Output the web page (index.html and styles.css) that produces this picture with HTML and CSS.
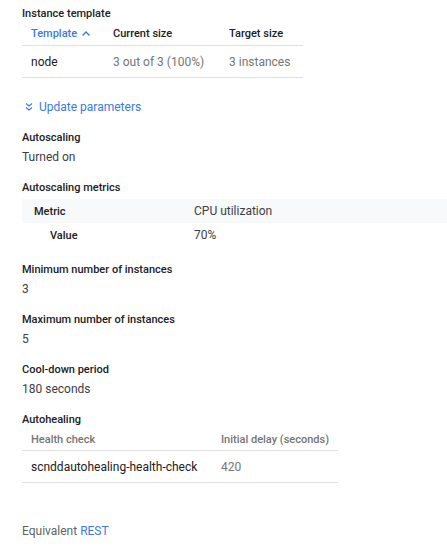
FILE: index.html
```html
<!DOCTYPE html>
<html>
<head>
<meta charset="utf-8">
<link rel="stylesheet" href="styles.css">
</head>
<body>
<div class="page">
  <div class="label first">Instance template</div>
  <div class="tbl tpl">
    <div class="cell head sort">Template
      <svg class="chev" width="10" height="10" viewBox="0 0 10 10"><path d="M1.5 6.5 L5 3 L8.5 6.5" fill="none" stroke="#3b78e7" stroke-width="1.4"/></svg>
    </div>
    <div class="cell head">Current size</div>
    <div class="cell head">Target size</div>
    <div class="cell body">node</div>
    <div class="cell body muted">3 out of 3 (100%)</div>
    <div class="cell body muted">3 instances</div>
  </div>

  <a class="update" href="#">
    <svg class="dchev" width="10" height="10" viewBox="0 0 10 10"><path d="M2 1.5 L5 4 L8 1.5 M2 5.5 L5 8 L8 5.5" fill="none" stroke="#3b78e7" stroke-width="1.1"/></svg>
    Update parameters
  </a>

  <div class="section">
    <div class="label">Autoscaling</div>
    <div class="value">Turned on</div>
  </div>

  <div class="section metrics-section">
    <div class="label metrics-label">Autoscaling metrics</div>
    <div class="metrics">
      <div class="mrow shade"><div class="mkey">Metric</div><div class="mval">CPU utilization</div></div>
      <div class="mrow"><div class="mkey sub">Value</div><div class="mval">70%</div></div>
    </div>
  </div>

  <div class="section">
    <div class="label">Minimum number of instances</div>
    <div class="value">3</div>
  </div>

  <div class="section">
    <div class="label">Maximum number of instances</div>
    <div class="value">5</div>
  </div>

  <div class="section">
    <div class="label">Cool-down period</div>
    <div class="value">180 seconds</div>
  </div>

  <div class="label">Autohealing</div>
  <div class="tbl heal">
    <div class="cell head gray">Health check</div>
    <div class="cell head gray">Initial delay (seconds)</div>
    <div class="cell body">scnddautohealing-health-check</div>
    <div class="cell body muted">420</div>
  </div>

  <div class="rest">Equivalent <a href="#">REST</a></div>
</div>
</body>
</html>
```

FILE: styles.css
```css
html, body {
  margin: 0;
  padding: 0;
  background: #ffffff;
}
body {
  font-family: Roboto, "Liberation Sans", sans-serif;
  color: #202124;
}
.page {
  padding: 0 0 0 22px;
}
.label {
  font-size: 11px;
  font-weight: 500;
  line-height: 16px;
  color: #202124;
}
.label.first {
  padding-top: 6px;
}
.value {
  font-size: 12px;
  line-height: 18px;
  margin-top: 2px;
  color: #3c4043;
}
.section {
  margin-bottom: 14px;
}
.metrics-section {
  margin-bottom: 15px;
}
.tbl {
  display: grid;
}
.tpl {
  grid-template-columns: 82px 116px 83px;
  width: 281px;
}
.heal {
  grid-template-columns: 190px 126px;
  width: 316px;
}
.cell {
  padding-left: 9px;
  display: flex;
  align-items: center;
  border-bottom: 1px solid #e0e0e0;
  white-space: nowrap;
}
.cell.head {
  height: 23px;
  font-size: 11px;
  font-weight: 500;
  color: #202124;
}
.heal .cell.head {
  height: 22px;
}
.cell.head.gray {
  color: #757575;
}
.cell.body {
  height: 31px;
  font-size: 12px;
  color: #202124;
}
.cell.muted {
  color: #757575;
}
.sort {
  color: #3b78e7 !important;
}
.chev {
  margin-left: 4px;
}
.update {
  display: flex;
  align-items: center;
  margin-top: 20px;
  margin-bottom: 14px;
  height: 18px;
  font-size: 12px;
  color: #3b78e7;
  text-decoration: none;
}
.dchev {
  margin: 0 5px 0 2px;
}
.metrics-label {
  margin-bottom: 3px;
}
.mrow {
  display: flex;
  align-items: center;
  height: 24px;
  font-size: 11px;
}
.mrow.shade {
  background: #f8f9fa;
}
.mkey {
  width: 160px;
  padding-left: 12px;
  font-weight: 500;
  color: #202124;
}
.mkey.sub {
  width: 144px;
  padding-left: 28px;
}
.mval {
  font-size: 12px;
  color: #3c4043;
}
.rest {
  margin-top: 39px;
  font-size: 12px;
  line-height: 18px;
  color: #5f6368;
}
.rest a {
  color: #3b78e7;
  text-decoration: none;
}
```
